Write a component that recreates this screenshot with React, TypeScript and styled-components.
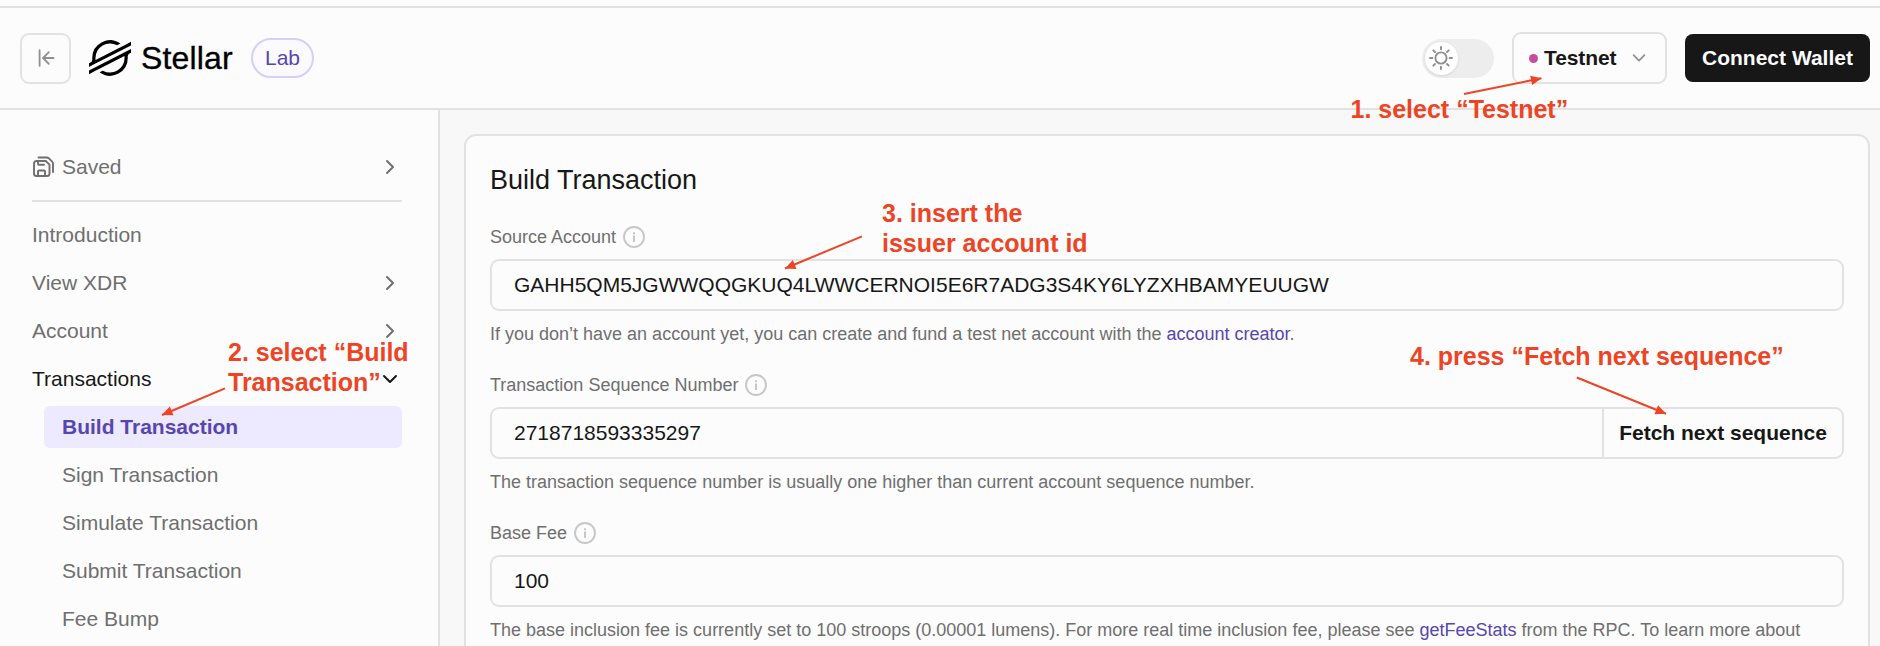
import React from 'react';
import styled, { createGlobalStyle, css } from 'styled-components';

const color = {
  surface: '#fcfcfc',
  page: '#f8f8f8',
  border: '#e2e2e2',
  text: '#171717',
  muted: '#6f6f6f',
  icon: '#8f8f8f',
  faint: '#c7c7c7',
  accent: '#5746af',
  accentSoft: '#ede9fe',
  accentBorder: '#d7cff9',
  pink: '#ca4b9b',
  note: '#ed4425',
};

const GlobalStyle = createGlobalStyle`
  *, *::before, *::after { box-sizing: border-box; }
  body {
    margin: 0;
    overflow: hidden;
    background: ${color.page};
    color: ${color.text};
    font-family: "Liberation Sans", Arial, Helvetica, sans-serif;
    font-size: 21px;
  }
  button, input { font: inherit; color: inherit; }
`;

const Page = styled.div`
  position: relative;
  display: flex;
  flex-direction: column;
  height: 646px;
  overflow: hidden;
`;

const TopStrip = styled.div`
  flex: none;
  height: 8px;
  background: ${color.surface};
  border-bottom: 2px solid ${color.border};
`;

const Header = styled.header`
  flex: none;
  display: flex;
  align-items: center;
  justify-content: space-between;
  height: 102px;
  padding: 0 10px 0 20px;
  background: ${color.surface};
  border-bottom: 2px solid ${color.border};
`;

const Brand = styled.div`
  display: flex;
  align-items: center;
`;

const CollapseButton = styled.button`
  display: flex;
  align-items: center;
  justify-content: center;
  width: 51px;
  height: 51px;
  padding: 0;
  background: transparent;
  border: 2px solid ${color.border};
  border-radius: 9px;
`;

const Logo = styled.svg`
  width: 42px;
  height: 36px;
  margin-left: 18px;
`;

const Wordmark = styled.span`
  width: 98px;
  margin: 0 12px 0 10px;
  font-size: 32px;
  line-height: 40px;
  letter-spacing: 0.15px;
  color: #000;
  -webkit-text-stroke: 0.35px #000;
`;

const Pill = styled.span`
  display: flex;
  align-items: center;
  justify-content: center;
  width: 63px;
  height: 40px;
  border: 2px solid ${color.accentBorder};
  border-radius: 20px;
  background: #fbfaff;
  color: ${color.accent};
`;

const Actions = styled.div`
  display: flex;
  align-items: center;
`;

const ThemeSwitch = styled.div`
  display: flex;
  align-items: center;
  width: 72px;
  height: 39px;
  padding: 0 3px;
  border-radius: 20px;
  background: #ededed;
`;

const Knob = styled.span`
  display: flex;
  align-items: center;
  justify-content: center;
  width: 33px;
  height: 33px;
  border-radius: 50%;
  background: #fff;
  box-shadow: 0 1px 3px rgba(0, 0, 0, 0.1);
`;

const NetworkSelect = styled.button`
  display: flex;
  align-items: center;
  width: 155px;
  height: 52px;
  margin-left: 18px;
  padding: 0 0 0 15px;
  background: ${color.surface};
  border: 2px solid ${color.border};
  border-radius: 9px;
  font-weight: 700;
  letter-spacing: -0.1px;
  svg { margin-left: 14px; }
`;

const Dot = styled.span`
  width: 9px;
  height: 9px;
  margin-right: 6px;
  border-radius: 50%;
  background: ${color.pink};
`;

const WalletButton = styled.button`
  width: 185px;
  height: 48px;
  margin-left: 18px;
  padding: 0;
  border: 0;
  border-radius: 8px;
  background: ${color.text};
  color: #fcfcfc;
  font-weight: 700;
`;

const Body = styled.div`
  flex: 1;
  display: flex;
  min-height: 0;
`;

const Sidebar = styled.nav`
  flex: none;
  display: flex;
  flex-direction: column;
  gap: 6px;
  width: 440px;
  padding: 36px 36px 0 32px;
  background: ${color.surface};
  border-right: 2px solid ${color.border};
`;

const NavItem = styled.a<{ $nested?: boolean; $active?: boolean; $open?: boolean }>`
  flex: none;
  display: flex;
  align-items: center;
  height: 42px;
  padding-right: 3px;
  border-radius: 6px;
  white-space: nowrap;
  color: ${(p) => (p.$open ? color.text : color.muted)};
  ${(p) => p.$nested && css`
    margin-left: 12px;
    padding-left: 18px;
  `}
  ${(p) => p.$active && css`
    background: ${color.accentSoft};
    color: ${color.accent};
    font-weight: 700;
  `}
`;

const NavLabel = styled.span`
  flex: 1;
`;

const SavedIcon = styled.svg`
  width: 22px;
  height: 22px;
  margin: 0 7px 0 1px;
`;

const Divider = styled.hr`
  flex: none;
  width: 100%;
  height: 2px;
  margin: 6px 0;
  border: 0;
  background: ${color.border};
`;

const Main = styled.main`
  flex: 1;
  min-width: 0;
  padding: 24px 10px 0 24px;
`;

const Card = styled.section`
  height: 700px;
  padding: 28px 24px;
  background: ${color.surface};
  border: 2px solid ${color.border};
  border-radius: 12px;
`;

const Title = styled.h1`
  margin: 0 0 30px;
  font-size: 27px;
  font-weight: 400;
  line-height: 32px;
`;

const Field = styled.div`
  display: flex;
  flex-direction: column;
  gap: 11px;
  margin-bottom: 28px;
`;

const FieldLabel = styled.label`
  display: flex;
  align-items: center;
  gap: 7px;
  height: 22px;
  font-size: 18px;
  color: ${color.muted};
`;

const InputGroup = styled.div`
  display: flex;
  height: 52px;
  border: 2px solid ${color.border};
  border-radius: 9px;
  overflow: hidden;
`;

const TextInput = styled.input`
  flex: 1;
  min-width: 0;
  padding: 0 22px;
  border: 0;
  outline: 0;
  background: transparent;
`;

const InputButton = styled.button`
  width: 240px;
  padding: 0;
  border: 0;
  border-left: 2px solid ${color.border};
  background: transparent;
  font-weight: 700;
`;

const Help = styled.p`
  margin: 0;
  font-size: 18px;
  line-height: 24px;
  color: ${color.muted};
  white-space: nowrap;
`;

const Link = styled.a`
  color: ${color.accent};
`;

const Arrows = styled.svg`
  position: absolute;
  inset: 0;
  pointer-events: none;
`;

const Note = styled.p<{ $x: number; $y: number }>`
  position: absolute;
  left: ${(p) => p.$x}px;
  top: ${(p) => p.$y}px;
  margin: 0;
  font-size: 25px;
  font-weight: 700;
  line-height: 30px;
  white-space: nowrap;
  color: ${color.note};
`;

const Chevron = ({ down, thin }: { down?: boolean; thin?: boolean }) => (
  <svg width="18" height="18" viewBox="0 0 18 18" fill="none" stroke={thin ? color.icon : 'currentColor'}
    strokeWidth={thin ? 1.7 : 2} strokeLinecap="round" strokeLinejoin="round">
    <path d={thin ? 'M3.6 6.2 9 11.6l5.4-5.4' : down ? 'M3 6l6 6 6-6' : 'M6 3l6 6-6 6'} />
  </svg>
);

const InfoIcon = () => (
  <svg width="22" height="22" viewBox="0 0 22 22" fill="none" stroke={color.faint}>
    <circle cx="11" cy="11" r="10" strokeWidth="1.9" />
    <path d="M11 9.6V16M11 6.2v2" strokeWidth="2" />
  </svg>
);

const SunIcon = () => (
  <svg width="26" height="26" viewBox="0 0 26 26" fill="none" stroke={color.icon} strokeWidth="1.9" strokeLinecap="round">
    <circle cx="12" cy="13" r="5.6" />
    <path d="M12 2v2.4M12 21.6V24M1 13h2.4M20.6 13H23M4.3 5.3 6 7M18 19l1.7 1.7M4.3 20.7 6 19M18 7l1.7-1.7" />
  </svg>
);

const CollapseIcon = () => (
  <svg width="20" height="20" viewBox="0 0 20 20" fill="none" stroke={color.icon} strokeWidth="1.8" strokeLinecap="round" strokeLinejoin="round">
    <path d="M3.6 2.2v15.6M17.6 10H7.2M12.8 4.2 7 10l5.8 5.8" />
  </svg>
);

const StellarLogo = () => (
  <Logo viewBox="0 0 236.36 200" fill="#000">
    <path d="M203 26.16l-28.46 14.5-137.43 70a82.49 82.49 0 0 1-.7-10.69A81.87 81.87 0 0 1 158.2 28.6l16.29-8.3 2.43-1.24A100 100 0 0 0 18.18 100q0 3.82.29 7.61a18.19 18.19 0 0 1-9.88 17.58L0 129.57V150l25.29-12.89 8.19-4.18 8.07-4.11L186.43 55l16.28-8.29 33.65-17.15V9.14Z" />
    <path d="M236.36 50 49.78 145 33.5 153.31 0 170.38v20.41l33.27-16.95 28.46-14.5L199.3 89.24A83.45 83.45 0 0 1 200 100 81.87 81.87 0 0 1 78.09 171.36l-1 .53-17.66 9A100 100 0 0 0 218.18 100c0-2.57-.1-5.14-.29-7.68a18.2 18.2 0 0 1 9.87-17.58l8.6-4.38Z" />
  </Logo>
);

const SaveIcon = () => (
  <SavedIcon viewBox="0 0 22 22" fill="none" stroke="currentColor" strokeWidth="1.9" strokeLinecap="round" strokeLinejoin="round">
    <path d="M5.5 1.5h8.1c1 0 1.6.2 2.3.9l3 3c.8.8 1.1 1.4 1.1 2.4V16" />
    <path d="M3.6 5h9.2l3.7 3.7v8.7a2.6 2.6 0 0 1-2.6 2.6H3.6A2.6 2.6 0 0 1 1 17.4V7.6A2.6 2.6 0 0 1 3.6 5Z" />
    <path d="M5 5.2v2.6c0 .6.3.9.9.9H11M5 19.8v-4.4c0-.6.3-.9.9-.9h5.2c.6 0 .9.3.9.9v4.4" />
  </SavedIcon>
);

const arrows: [number, number, number, number][] = [
  [1464, 94, 1541.5, 78.3],
  [225, 388.3, 162, 415],
  [862, 236.3, 785, 268.5],
  [1576.8, 377.5, 1666, 413.7],
];

const nested = ['Sign Transaction', 'Simulate Transaction', 'Submit Transaction', 'Fee Bump'];

export default function App() {
  return (
    <Page>
      <GlobalStyle />
      <TopStrip />
      <Header>
        <Brand>
          <CollapseButton aria-label="Collapse sidebar"><CollapseIcon /></CollapseButton>
          <StellarLogo />
          <Wordmark>Stellar</Wordmark>
          <Pill>Lab</Pill>
        </Brand>
        <Actions>
          <ThemeSwitch><Knob><SunIcon /></Knob></ThemeSwitch>
          <NetworkSelect><Dot />Testnet<Chevron thin /></NetworkSelect>
          <WalletButton>Connect Wallet</WalletButton>
        </Actions>
      </Header>
      <Body>
        <Sidebar>
          <NavItem><SaveIcon /><NavLabel>Saved</NavLabel><Chevron /></NavItem>
          <Divider />
          <NavItem><NavLabel>Introduction</NavLabel></NavItem>
          <NavItem><NavLabel>View XDR</NavLabel><Chevron /></NavItem>
          <NavItem><NavLabel>Account</NavLabel><Chevron /></NavItem>
          <NavItem $open><NavLabel>Transactions</NavLabel><Chevron down /></NavItem>
          <NavItem $nested $active>Build Transaction</NavItem>
          {nested.map((label) => <NavItem $nested key={label}>{label}</NavItem>)}
        </Sidebar>
        <Main>
          <Card>
            <Title>Build Transaction</Title>
            <Field>
              <FieldLabel>Source Account<InfoIcon /></FieldLabel>
              <InputGroup>
                <TextInput readOnly value="GAHH5QM5JGWWQQGKUQ4LWWCERNOI5E6R7ADG3S4KY6LYZXHBAMYEUUGW" />
              </InputGroup>
              <Help>
                If you don’t have an account yet, you can create and fund a test net account with the{' '}
                <Link>account creator</Link>.
              </Help>
            </Field>
            <Field>
              <FieldLabel>Transaction Sequence Number<InfoIcon /></FieldLabel>
              <InputGroup>
                <TextInput readOnly value="2718718593335297" />
                <InputButton>Fetch next sequence</InputButton>
              </InputGroup>
              <Help>The transaction sequence number is usually one higher than current account sequence number.</Help>
            </Field>
            <Field>
              <FieldLabel>Base Fee<InfoIcon /></FieldLabel>
              <InputGroup>
                <TextInput readOnly value="100" />
              </InputGroup>
              <Help>
                The base inclusion fee is currently set to 100 stroops (0.00001 lumens). For more real time inclusion
                fee, please see <Link>getFeeStats</Link> from the RPC. To learn more about
              </Help>
            </Field>
          </Card>
        </Main>
      </Body>

      <Arrows width="1880" height="646" viewBox="0 0 1880 646">
        <defs>
          <marker id="head" markerUnits="userSpaceOnUse" markerWidth="12" markerHeight="10" refX="11" refY="5" orient="auto">
            <path d="M0.5 0.2 11 5 0.5 9.8Z" fill={color.note} />
          </marker>
        </defs>
        {arrows.map(([x1, y1, x2, y2]) => (
          <line key={x1} x1={x1} y1={y1} x2={x2} y2={y2} stroke={color.note} strokeWidth="2" markerEnd="url(#head)" />
        ))}
      </Arrows>
      <Note $x={1350.5} $y={94}>1. select “Testnet”</Note>
      <Note $x={228} $y={337}>2. select “Build<br />Transaction”</Note>
      <Note $x={882} $y={198}>3. insert the<br />issuer account id</Note>
      <Note $x={1410} $y={341}>4. press “Fetch next sequence”</Note>
    </Page>
  );
}
